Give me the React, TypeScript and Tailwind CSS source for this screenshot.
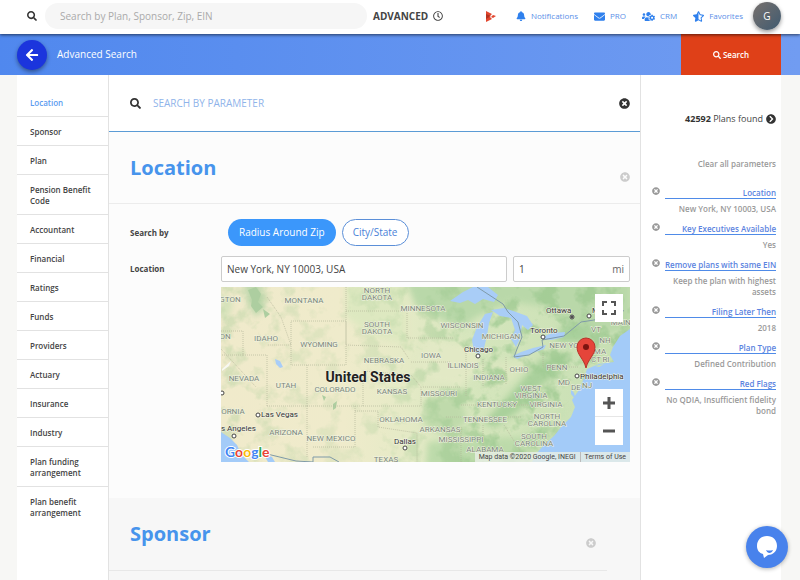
import React from 'react';
import {
  FaArrowLeft,
  FaBell,
  FaChevronCircleRight,
  FaEnvelope,
  FaRegClock,
  FaSearch,
  FaStarHalfAlt,
  FaTimesCircle,
  FaUsersCog,
} from 'react-icons/fa';

const SECTIONS = [
  'Location',
  'Sponsor',
  'Plan',
  'Pension Benefit Code',
  'Accountant',
  'Financial',
  'Ratings',
  'Funds',
  'Providers',
  'Actuary',
  'Insurance',
  'Industry',
  'Plan funding arrangement',
  'Plan benefit arrangement',
];

const PARAMETERS = [
  { name: 'Location', value: 'New York, NY 10003, USA' },
  { name: 'Key Executives Available', value: 'Yes' },
  { name: 'Remove plans with same EIN', value: 'Keep the plan with highest assets' },
  { name: 'Filing Later Then', value: '2018' },
  { name: 'Plan Type', value: 'Defined Contribution' },
  { name: 'Red Flags', value: 'No QDIA, Insufficient fidelity bond' },
];

// label, centre x, baseline y
const STATES: [string, number, number][] = [
  ['GTON', 9, 15],
  ['MONTANA', 83, 16],
  ['NORTH', 156, 6],
  ['DAKOTA', 156, 13],
  ['MINNESOTA', 202, 24],
  ['SOUTH', 156, 40],
  ['DAKOTA', 156, 47],
  ['WISCONSIN', 241, 41],
  ['ON', 4, 52],
  ['IDAHO', 45, 54],
  ['WYOMING', 98, 60],
  ['MICHIGAN', 280, 52],
  ['VT', 375, 45],
  ['MAINE', 402, 38],
  ['NH', 384, 56],
  ['NEW YORK', 348, 61],
  ['MA', 379, 67],
  ['CT', 375, 75],
  ['RI', 385, 75],
  ['IOWA', 210, 71],
  ['NEBRASKA', 163, 76],
  ['ILLINOIS', 242, 81],
  ['OHIO', 298, 85],
  ['PENN', 336, 83],
  ['NEVADA', 23, 94],
  ['UTAH', 65, 101],
  ['COLORADO', 114, 105],
  ['INDIANA', 268, 93],
  ['MD', 343, 98],
  ['DE', 355, 103],
  ['NJ', 366, 101],
  ['KANSAS', 171, 107],
  ['MISSOURI', 218, 109],
  ['WEST', 310, 104],
  ['VIRGINIA', 310, 111],
  ['KENTUCKY', 276, 120],
  ['VIRGINIA', 325, 120],
  ['ORNIA', 12, 127],
  ['OKLAHOMA', 180, 135],
  ['TENNESSEE', 264, 135],
  ['NORTH', 326, 132],
  ['CAROLINA', 326, 139],
  ['ARIZONA', 65, 148],
  ['ARKANSAS', 219, 145],
  ['NEW MEXICO', 110, 154],
  ['MISSISSIPPI', 240, 155],
  ['SOUTH', 313, 152],
  ['CAROLINA', 313, 159],
  ['ALABAMA', 264, 165],
  ['TEXAS', 165, 175],
];

// label, text x, baseline y, marker x, marker y
const CITIES: [string, number, number, number, number][] = [
  ['Ottawa', 325, 26, 351, 30],
  ['Toronto', 309, 46, 322, 50],
  ['M', 371, 26, 368, 29],
  ['Chicago', 243, 65, 257, 69],
  ['Philadelphia', 359, 92, 356, 89],
  ['Las Vegas', 40, 130, 37, 128],
  ['s Angeles', 0, 144, 13, 149],
  ['Dallas', 173, 157, 184, 161],
];

const StateMap: React.FC = () => (
  <svg
    viewBox="0 0 409 175"
    preserveAspectRatio="xMidYMid slice"
    className="block h-[175px] w-full"
    role="img"
    aria-label="Map of the United States"
  >
    <defs>
      <filter id="soft" x="-10%" y="-10%" width="120%" height="120%" colorInterpolationFilters="sRGB">
        <feGaussianBlur stdDeviation="3" />
      </filter>
      {/* blotchy woodland cover */}
      <filter id="woods" x="0" y="0" width="100%" height="100%" colorInterpolationFilters="sRGB">
        <feTurbulence type="fractalNoise" baseFrequency="0.05" numOctaves="4" seed="7" />
        <feColorMatrix values="0 0 0 0 0.62  0 0 0 0 0.79  0 0 0 0 0.57  5 0 0 0 -2.5" />
      </filter>
      <linearGradient id="land" x1="0" x2="1" y1="0" y2="0">
        <stop offset="0" stopColor="#f0eacb" />
        <stop offset="0.3" stopColor="#efebcb" />
        <stop offset="0.45" stopColor="#e5eac6" />
        <stop offset="0.6" stopColor="#d6e6bd" />
        <stop offset="1" stopColor="#c6dfb3" />
      </linearGradient>
      <linearGradient id="cover" x1="0" x2="1" y1="0" y2="0">
        <stop offset="0" stopColor="#555" />
        <stop offset="0.3" stopColor="#2a2a2a" />
        <stop offset="0.48" stopColor="#555" />
        <stop offset="0.65" stopColor="#bbb" />
        <stop offset="1" stopColor="#ccc" />
      </linearGradient>
      <mask id="cover-mask">
        <rect width="409" height="175" fill="url(#cover)" />
      </mask>
    </defs>
    <rect width="409" height="175" fill="url(#land)" />
    <g filter="url(#soft)">
      <path d="M185 -5H409V40L370 50L350 45L330 20L290 15L255 30L240 42L215 30L195 20Z" fill="#b9d8a9" />
      <path d="M22 -5H40L44 22L34 30L26 14Z" fill="#bdd7ac" />
      <path d="M125 -5H185V55L150 50L125 30Z" fill="#dde8c0" />
      <path d="M0 5L12 14L8 30L0 34Z" fill="#d3e2b9" />
      <path d="M320 72L350 66L340 85L318 100L300 122L275 140L262 136L288 108Z" fill="#a9d09b" />
      <path d="M205 110L240 108L246 135L225 150L203 138Z" fill="#bfdaab" />
      <path d="M207 155L300 150L340 130L345 118L320 160L300 180H205Z" fill="#bcdaaa" />
      <path d="M205 52L250 58L262 78L240 100L210 95L195 75Z" fill="#e2e9c5" />
      <path d="M265 75L310 72L290 95L262 100Z" fill="#dae6bf" />
      <path d="M340 40L372 38L366 55L335 55Z" fill="#a8d09b" />
    </g>
    <g mask="url(#cover-mask)">
      <rect width="409" height="175" filter="url(#woods)" />
    </g>
    <g fill="#adcea0">
      <path d="M27 3l8-3 5 7-3 8 5 5-7 6-5-7 1-6z" />
      <path d="M42 22l7 5-5 4zM101 108l4 2-2 4zM112 117l4-3-1 7-3 2z" />
    </g>
    {/* Great lakes */}
    <g fill="#a9cdf7">
      <path d="M229 14L242 5L252 0H267L277 8L273 15L262 12L254 17L247 13L239 16Z" />
      <path d="M253 65L251 53L256 40L264 27L272 25L268 36L266 49L263 61L258 67Z" />
      <path d="M270 23L283 21L295 25L306 29L312 38L307 43L301 38L299 52L295 60L290 52L294 43L290 31L279 29Z" />
      <path d="M292 69L300 65L312 61L325 58L323 62L309 67L296 72Z" />
      <path d="M319 51L331 46L344 45L343 50L330 53Z" />
      <path d="M54 72l5 2 3 6-3 1-4-4z" />
    </g>
    {/* Atlantic and Pacific */}
    <path d="M409 42L399 49L392 60L389 68L393 75L378 77L366 82L363 91L358 103L351 113L354 120L350 130L341 139L333 149L323 158L315 167L311 175H409Z" fill="#a3cbf8" />
    <path d="M0 145L9 151L16 158L20 167L28 175H0Z" fill="#a3cbf8" />
    <path d="M42 166l9 4 3 5h-7z" fill="#a3cbf8" />
    <path d="M350 102l3 4 2 7-5-6z" fill="#a3cbf8" />
    <path d="M374 79l9-2-5 3z" fill="#c9e0b3" />
    <path d="M1 82l9-8-2 5-7 5z" fill="#f8f8f2" />
    <g fill="none" stroke="#b5b79b" strokeWidth="1" strokeDasharray="1 1" opacity="0.7">
      <path d="M0 44H22V68M22 68H46V120M22 68H0M70 34H125V78H70V34M125 24H186M125 0V58M125 58L180 60L188 72M86 78V119M46 119H200M86 119V170M142 88V119M142 84L190 88L200 100V119M134 119V160H92M134 124H157V140L196 146V175M186 24V51H232M190 75H230M202 100H240M245 60V110M262 72V100M285 70V98M240 118H335M225 130H300M240 140V175M262 138V175M283 138L300 165M322 66V80H358M0 62L35 100M46 10L60 30L70 58H46" />
    </g>
    <g fill="none" stroke="#7f9aa8" strokeWidth="1">
      <path d="M256 0L282 17L287 25L297 35L301 50L296 62L293 70L308 68L322 60L321 53L343 49L360 35L373 33" />
      <path d="M42 166L75 174L92 175V170H109L118 175M373 33L388 29L393 20L403 24" />
    </g>
    <g
      fontFamily="Roboto, sans-serif"
      fontSize="8"
      fill="#7b8579"
      stroke="#f1f4e2"
      strokeWidth="1"
      paintOrder="stroke"
      textAnchor="middle"
    >
      {STATES.map(([name, x, y], i) => (
        <text key={i} x={x} y={y}>{name}</text>
      ))}
    </g>
    <g fontFamily="Roboto, sans-serif" fontSize="8" fill="#333" stroke="#f4f5e6" strokeWidth="1" paintOrder="stroke">
      {CITIES.map(([name, x, y]) => (
        <text key={name} x={x} y={y}>{name}</text>
      ))}
    </g>
    <g fill="#fff" stroke="#444" strokeWidth="1">
      {CITIES.map(([name, , , x, y]) => (
        <circle key={name} cx={x} cy={y} r="2" />
      ))}
      <circle cx="1" cy="106" r="2" />
      <circle cx="351" cy="30" r="1" fill="#444" />
    </g>
    <text
      x="147"
      y="95"
      fontFamily="Roboto, sans-serif"
      fontSize="14"
      fontWeight="700"
      fill="#222"
      stroke="#f4f5e6"
      strokeWidth="1"
      paintOrder="stroke"
      textAnchor="middle"
    >
      United States
    </text>
    {/* pin */}
    <path d="M365 81C363 72 356 68 356 60A9 9 0 0 1 374 60C374 68 367 72 365 81Z" fill="#e5453a" stroke="#b93229" strokeWidth="1" />
    <circle cx="365" cy="60" r="3" fill="#7b1410" />
    <text x="4" y="170" fontFamily="Lato, sans-serif" fontSize="14" fontWeight="700" stroke="#fff" strokeWidth="2" paintOrder="stroke">
      <tspan fill="#4285f4">G</tspan>
      <tspan fill="#ea4335">o</tspan>
      <tspan fill="#fbbc05">o</tspan>
      <tspan fill="#4285f4">g</tspan>
      <tspan fill="#34a853">l</tspan>
      <tspan fill="#ea4335">e</tspan>
    </text>
  </svg>
);

const Header: React.FC = () => (
  <header className="relative z-10 flex h-[34px] shrink-0 items-center bg-white pr-[19px] pb-[2px] pl-[27px] shadow-[0_1px_3px_rgba(0,0,0,0.6)]">
    <label htmlFor="plan-search" aria-label="Search plans">
      <FaSearch className="size-[10px] text-[#333]" />
    </label>
    <input
      id="plan-search"
      placeholder="Search by Plan, Sponsor, Zip, EIN"
      className="ml-2 h-[26px] max-w-[322px] min-w-0 flex-1 rounded-full bg-[#f6f6f6] px-[15px] text-[10px] outline-none placeholder:text-[#aaa]"
    />
    <button className="ml-[6px] flex items-center gap-[5px] text-[10px] font-bold text-[#444]">
      ADVANCED
      <FaRegClock className="size-[10px]" />
    </button>
    <nav className="ml-auto flex items-center text-[8px] text-[#5b8fe8]">
      <a href="#" aria-label="Play">
        <svg viewBox="0 0 11 11" className="size-[11px]">
          <path d="M1 0L7 3L5 5L1 5ZM1 6H5L7 8L1 11Z" fill="#e2472f" />
          <path d="M1 3L6 5L1 8Z" fill="#b5321f" />
          <path d="M8 4L11 5L8 7L6 6Z" fill="#e2472f" />
        </svg>
      </a>
      <a href="#" className="ml-5 flex items-center gap-[5px]"><FaBell className="size-[10px] text-[#2f80ed]" />Notifications</a>
      <a href="#" className="ml-4 flex items-center gap-[5px]"><FaEnvelope className="size-[11px] text-[#2f80ed]" />PRO</a>
      <a href="#" className="ml-4 flex items-center gap-[5px]"><FaUsersCog className="size-[13px] text-[#2f80ed]" />CRM</a>
      <a href="#" className="ml-4 flex items-center gap-[5px]"><FaStarHalfAlt className="size-[11px] text-[#2f80ed]" />Favorites</a>
      <button className="ml-[10px] size-7 rounded-full bg-linear-to-br from-[#77706c] to-[#3f5a70] text-[10px] text-white shadow-[0_2px_4px_rgba(0,0,0,0.4)]">
        G
      </button>
    </nav>
  </header>
);

const SectionHeading: React.FC<{ title: string; className: string }> = ({ title, className }) => (
  <div className={`flex items-center justify-between pl-[21px] ${className}`}>
    <h2 className="text-xl leading-7 font-bold text-[#4794ec]">{title}</h2>
    <button aria-label={`Clear ${title}`} className="mt-[18px]">
      <FaTimesCircle className="size-[10px] text-[#ccc]" />
    </button>
  </div>
);

export default function App() {
  return (
    <div className="flex h-screen flex-col overflow-hidden bg-[#f7f7f5] font-['Open_Sans','Noto_Sans',sans-serif] text-[#444]">
      <Header />
      <div className="flex h-[41px] shrink-0 items-center bg-linear-to-r from-[#5088ee] to-[#719cf1] pr-[19px] pl-[17px]">
        <button aria-label="Back" className="flex size-[30px] items-center justify-center rounded-full bg-[#1b35dd] text-white shadow-[0_2px_4px_rgba(0,0,0,0.4)]">
          <FaArrowLeft className="size-[14px]" />
        </button>
        <h1 className="ml-[10px] text-[10px] text-white">Advanced Search</h1>
        <button className="ml-auto flex h-full w-[100px] items-center justify-center gap-[2px] bg-[#df4018] text-[8px] font-semibold text-white">
          <FaSearch className="size-2" />
          Search
        </button>
      </div>

      <div className="flex min-h-0 flex-1 pr-[19px] pl-[17px]">
        <nav className="w-[92px] shrink-0 border-r border-[#e2e2e2] bg-white pt-[13px]">
          <ul className="divide-y divide-[#e2e2e2]">
            {SECTIONS.map((name, i) => (
              <li key={name}>
                <a
                  href="#"
                  className={`block pt-[9px] pr-2 pb-2 pl-[13px] text-[8px] leading-[11px] font-semibold ${i === 0 ? 'text-[#5b9bf0]' : 'text-[#444]'}`}
                >
                  {name}
                </a>
              </li>
            ))}
          </ul>
        </nav>

        <main className="min-w-0 flex-1 overflow-hidden bg-[#fcfcfc]">
          <div className="flex h-[57px] items-center border-b border-[#5b9bd5] bg-white pr-[10px] pl-[21px]">
            <label htmlFor="parameter-search" aria-label="Search by parameter">
              <FaSearch className="size-[11px] text-[#333]" />
            </label>
            <input
              id="parameter-search"
              placeholder="SEARCH BY PARAMETER"
              className="ml-3 min-w-0 flex-1 text-[10px] outline-none placeholder:text-[#8fb4ea]"
            />
            <button aria-label="Clear search"><FaTimesCircle className="size-[11px] text-[#333]" /></button>
          </div>

          <section>
            <SectionHeading title="Location" className="h-[72px] border-b border-[#ececec] pr-[10px]" />
            <div className="pt-[15px] pr-[10px] pb-9 pl-[21px]">
              <div className="flex items-center">
                <span className="w-[98px] text-[8px] font-bold">Search by</span>
                <button className="h-[27px] rounded-full bg-[#3b97fb] px-[11px] text-[10px] text-white">Radius Around Zip</button>
                <button className="ml-[6px] h-[27px] rounded-full border border-[#5b8fd8] bg-white px-[10px] text-[10px] text-[#4a7fd8]">City/State</button>
              </div>
              <div className="mt-[10px] flex">
                <label htmlFor="location" className="w-[91px] shrink-0 pt-[7px] text-[8px] font-bold">Location</label>
                <div className="min-w-0 flex-1">
                  <div className="flex gap-[6px]">
                    <input
                      id="location"
                      defaultValue="New York, NY 10003, USA"
                      className="h-[26px] min-w-0 flex-1 rounded-xs border border-[#ccc] bg-white px-[5px] text-[10px]"
                    />
                    <div className="flex h-[26px] w-[117px] items-center rounded-xs border border-[#ccc] bg-white px-[5px] text-[10px]">
                      <input aria-label="Radius in miles" defaultValue="1" className="min-w-0 flex-1 outline-none" />
                      <span className="text-[#666]">mi</span>
                    </div>
                  </div>
                  <div className="relative mt-[5px]">
                    <StateMap />
                    <button aria-label="Full screen" className="absolute top-[7px] right-[7px] flex size-7 items-center justify-center bg-white">
                      <svg viewBox="0 0 14 14" className="size-[14px]" fill="none" stroke="#555" strokeWidth="2">
                        <path d="M1 5V1H5M9 1H13V5M13 9V13H9M5 13H1V9" />
                      </svg>
                    </button>
                    <div className="absolute right-[7px] bottom-[17px] w-7 divide-y divide-[#e6e6e6] bg-white">
                      <button aria-label="Zoom in" className="flex h-7 w-full items-center justify-center">
                        <svg viewBox="0 0 14 14" className="size-[14px]" stroke="#555" strokeWidth="3">
                          <path d="M7 1V13M1 7H13" />
                        </svg>
                      </button>
                      <button aria-label="Zoom out" className="flex h-7 w-full items-center justify-center">
                        <svg viewBox="0 0 14 14" className="size-[14px]" stroke="#555" strokeWidth="3">
                          <path d="M1 7H13" />
                        </svg>
                      </button>
                    </div>
                    <div className="absolute right-0 bottom-0 flex h-[10px] items-center divide-x divide-[#bbb] bg-[#e8efe6]/80 font-[Roboto,sans-serif] text-[7px] text-[#444]">
                      <span className="px-1">Map data ©2020 Google, INEGI</span>
                      <a href="#" className="px-1">Terms of Use</a>
                    </div>
                  </div>
                </div>
              </div>
            </div>
          </section>

          <section className="h-[100px] bg-[#f7f7f7] pr-[33px]">
            <SectionHeading title="Sponsor" className="h-[73px] border-b border-[#e8e8e8] pr-[11px]" />
          </section>
        </main>

        <aside className="w-[141px] shrink-0 border-l border-[#e2e2e2] bg-white pt-[37px] pr-[5px] pl-[11px] text-right text-[8px]">
          <button className="ml-auto flex items-center gap-[3px] text-[9px] leading-[14px]">
            <span><b className="text-[#333]">42592</b> Plans found</span>
            <FaChevronCircleRight className="size-[10px] text-[#333]" />
          </button>
          <button className="mt-8 leading-[11px] font-semibold text-[#999]">Clear all parameters</button>
          <ul className="mt-[17px]">
            {PARAMETERS.map(({ name, value }) => (
              <li key={name} className="mb-[9px] flex items-start justify-between">
                <button aria-label={`Remove ${name}`}><FaTimesCircle className="size-2 text-[#999]" /></button>
                <div className="w-[111px]">
                  <a href="#" className="block border-b border-[#4f8be8] leading-[11px] font-semibold whitespace-nowrap text-[#5b83e0]">{name}</a>
                  <p className="mt-1 leading-[11px] font-semibold text-[#999]">{value}</p>
                </div>
              </li>
            ))}
          </ul>
        </aside>
      </div>

      <button aria-label="Open chat" className="fixed right-3 bottom-3 z-20 flex size-[42px] items-center justify-center rounded-full bg-[#4882ec] shadow-[0_1px_4px_rgba(0,0,0,0.3)]">
        <svg viewBox="0 0 20 22" className="h-[22px] w-5">
          <path d="M10 0C16 0 20 4 20 10C20 16 15 19 11 19L7 22L6 18C2 17 0 14 0 10C0 4 4 0 10 0Z" fill="#fff" />
          <path d="M9 14Q12 15 16 14Q15 17 12 17Q10 17 9 14Z" fill="#4882ec" />
        </svg>
      </button>
    </div>
  );
}
